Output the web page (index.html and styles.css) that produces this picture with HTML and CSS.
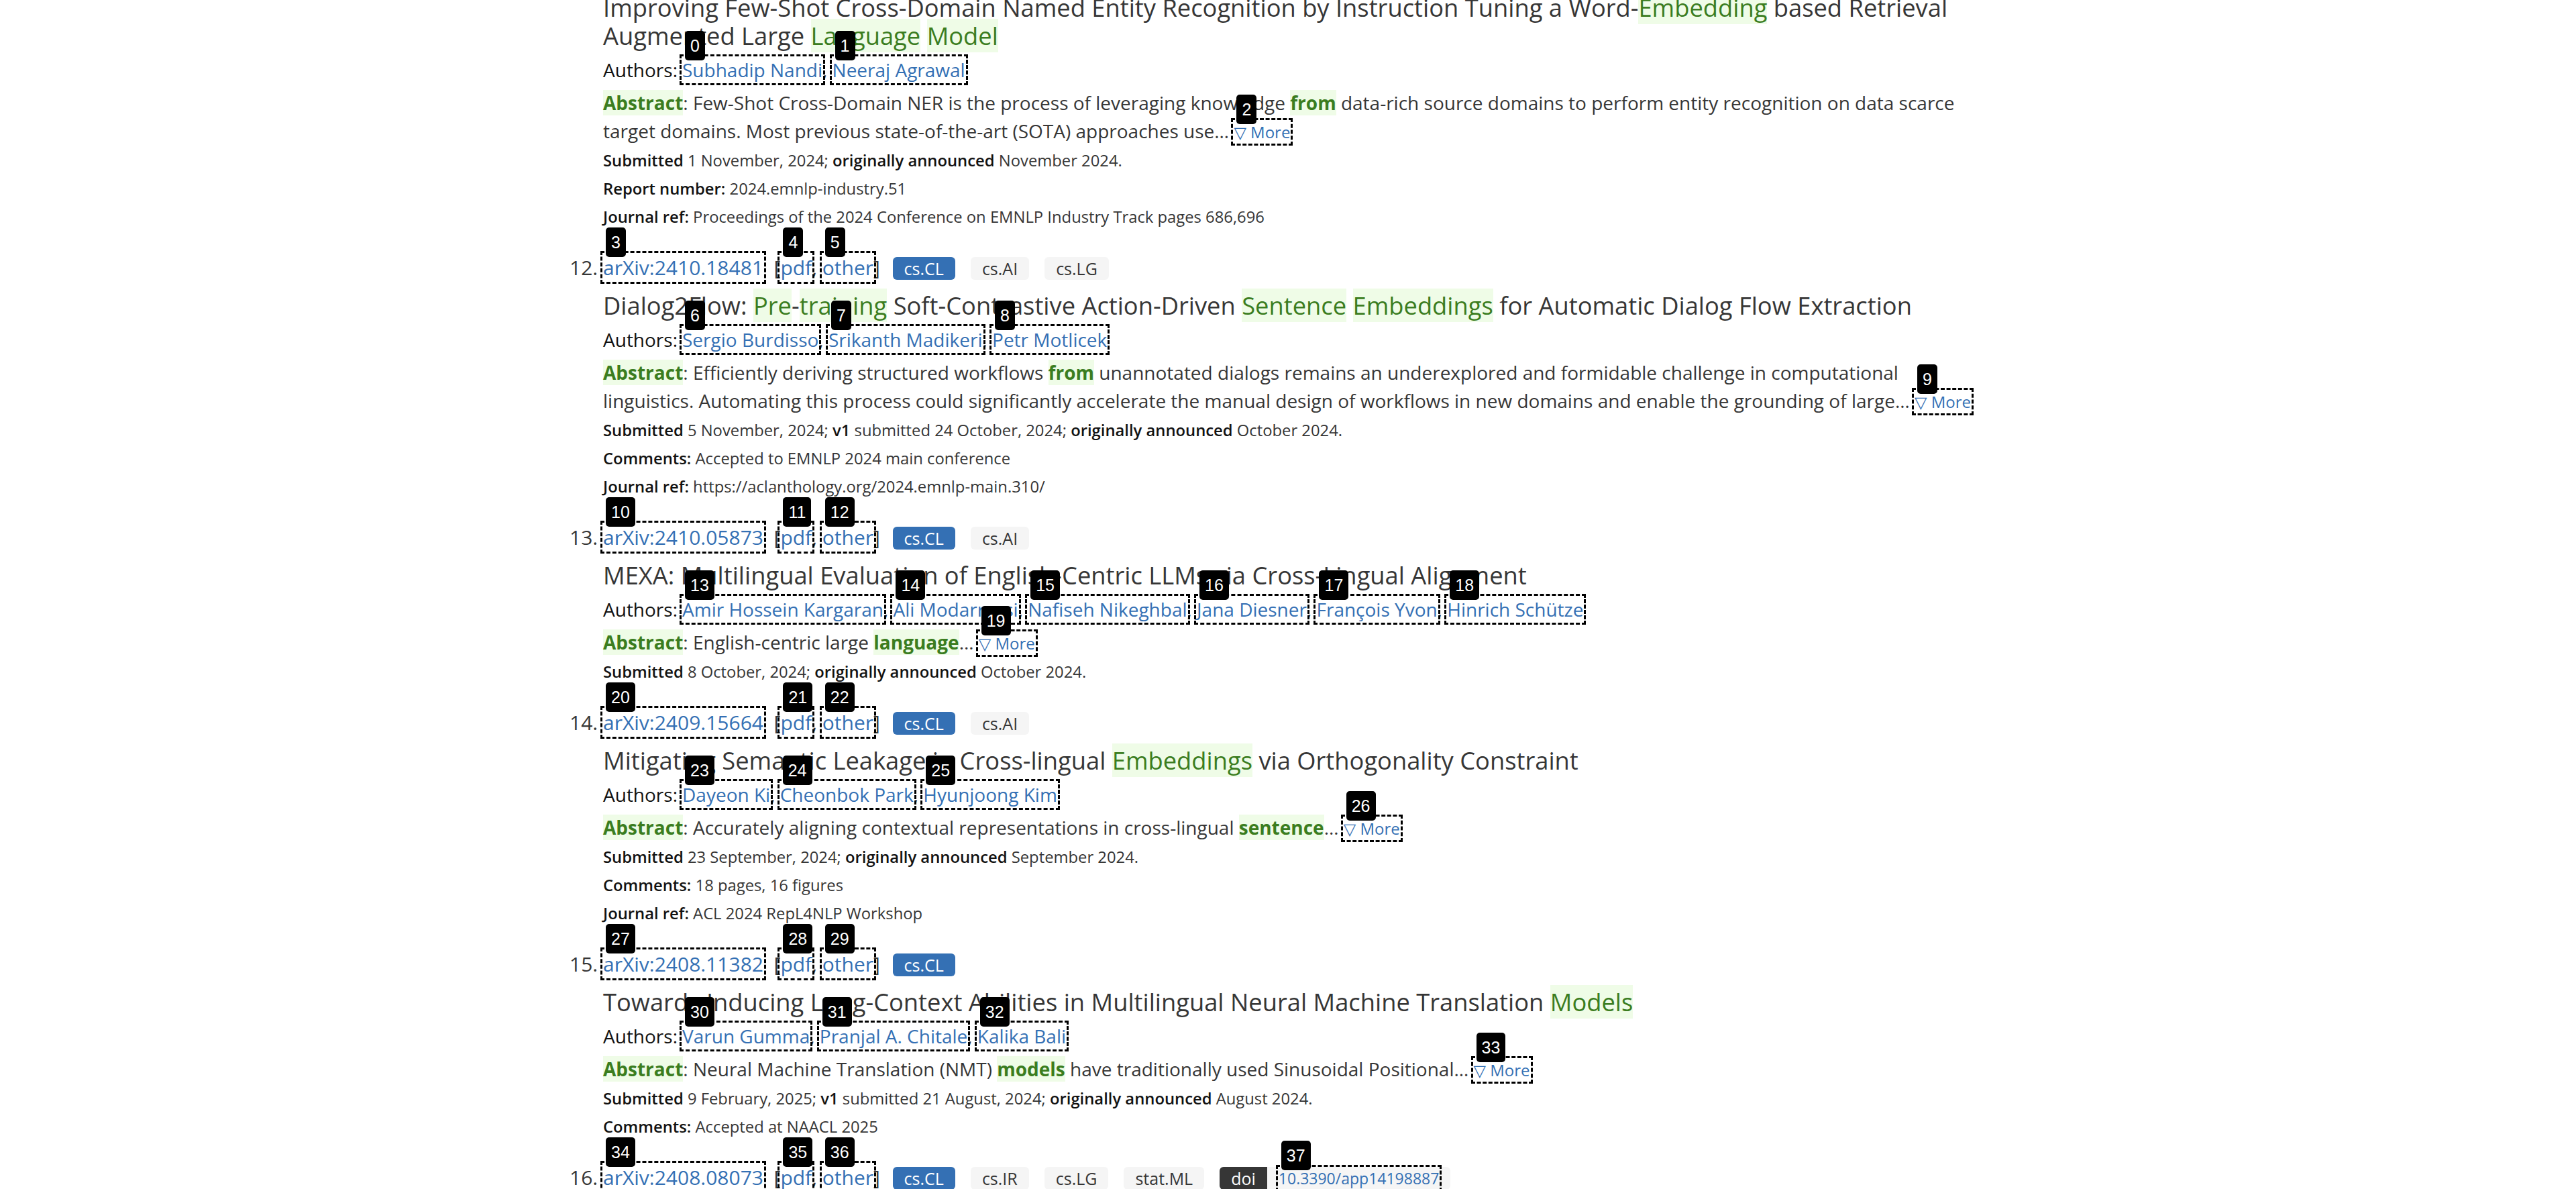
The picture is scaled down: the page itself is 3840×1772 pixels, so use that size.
FILE: index.html
```html
<!DOCTYPE html>
<html lang="en">
<head>
<meta charset="utf-8">
<title>arXiv search results</title>
<link rel="stylesheet" href="styles.css">
</head>
<body>
<ol class="results">
  <li class="result first" value="11">
    <p class="title">Improving Few-Shot Cross-Domain Named Entity Recognition by Instruction Tuning a Word-<span class="hit">Embedding</span> based Retrieval Augmented Large <span class="hit">Language</span> <span class="hit">Model</span></p>
    <p class="authors"><span class="lbl">Authors:</span><span class="mk"><span class="num">0</span><a class="lk" href="#">Subhadip Nandi</a></span>, <span class="mk"><span class="num">1</span><a class="lk" href="#">Neeraj Agrawal</a></span></p>
    <p class="abstract"><span class="hitb">Abstract</span>: Few-Shot Cross-Domain NER is the process of leveraging knowledge <span class="hitb">from</span> data-rich source domains to perform entity recognition on data scarce target domains. Most previous state-of-the-art (SOTA) approaches use&hellip; <span class="mk sm"><span class="num">2</span><a class="lk" href="#">&#9661; More</a></span></p>
    <p class="meta"><span class="b">Submitted</span> 1 November, 2024; <span class="b">originally announced</span> November 2024.</p>
    <p class="meta"><span class="b">Report number:</span> 2024.emnlp-industry.51</p>
    <p class="meta"><span class="b">Journal ref:</span> Proceedings of the 2024 Conference on EMNLP Industry Track pages 686,696</p>
  </li>

  <li class="result" value="12">
    <div class="row"><span class="mk"><span class="num">3</span><a class="lk" href="#">arXiv:2410.18481</a></span>&nbsp;<span>&nbsp;[<span class="mk"><span class="num">4</span><a class="lk" href="#">pdf</a></span>, <span class="mk"><span class="num">5</span><a class="lk" href="#">other</a></span>]&nbsp;</span><span class="tags"><span class="tag blue">cs.CL</span><span class="tag">cs.AI</span><span class="tag">cs.LG</span></span></div>
    <p class="title">Dialog2Flow: <span class="hit">Pre</span>-<span class="hit">training</span> Soft-Contrastive Action-Driven <span class="hit">Sentence</span> <span class="hit">Embeddings</span> for Automatic Dialog Flow Extraction</p>
    <p class="authors"><span class="lbl">Authors:</span><span class="mk"><span class="num">6</span><a class="lk" href="#">Sergio Burdisso</a></span>, <span class="mk"><span class="num">7</span><a class="lk" href="#">Srikanth Madikeri</a></span>, <span class="mk"><span class="num">8</span><a class="lk" href="#">Petr Motlicek</a></span></p>
    <p class="abstract"><span class="hitb">Abstract</span>: Efficiently deriving structured workflows <span class="hitb">from</span> unannotated dialogs remains an underexplored and formidable challenge in computational linguistics. Automating this process could significantly accelerate the manual design of workflows in new domains and enable the grounding of large&hellip; <span class="mk sm"><span class="num">9</span><a class="lk" href="#">&#9661; More</a></span></p>
    <p class="meta"><span class="b">Submitted</span> 5 November, 2024; <span class="b">v1</span> submitted 24 October, 2024; <span class="b">originally announced</span> October 2024.</p>
    <p class="meta"><span class="b">Comments:</span> Accepted to EMNLP 2024 main conference</p>
    <p class="meta"><span class="b">Journal ref:</span> https://aclanthology.org/2024.emnlp-main.310/</p>
  </li>

  <li class="result" value="13">
    <div class="row"><span class="mk"><span class="num">10</span><a class="lk" href="#">arXiv:2410.05873</a></span>&nbsp;<span>&nbsp;[<span class="mk"><span class="num">11</span><a class="lk" href="#">pdf</a></span>, <span class="mk"><span class="num">12</span><a class="lk" href="#">other</a></span>]&nbsp;</span><span class="tags"><span class="tag blue">cs.CL</span><span class="tag">cs.AI</span></span></div>
    <p class="title">MEXA: Multilingual Evaluation of English-Centric LLMs via Cross-Lingual Alignment</p>
    <p class="authors"><span class="lbl">Authors:</span><span class="mk"><span class="num">13</span><a class="lk" href="#">Amir Hossein Kargaran</a></span>, <span class="mk"><span class="num">14</span><a class="lk" href="#">Ali Modarressi</a></span>, <span class="mk"><span class="num">15</span><a class="lk" href="#">Nafiseh Nikeghbal</a></span>, <span class="mk"><span class="num">16</span><a class="lk" href="#">Jana Diesner</a></span>, <span class="mk"><span class="num">17</span><a class="lk" href="#">François Yvon</a></span>, <span class="mk"><span class="num">18</span><a class="lk" href="#">Hinrich Schütze</a></span></p>
    <p class="abstract"><span class="hitb">Abstract</span>: English-centric large <span class="hitb">language</span>&hellip; <span class="mk sm"><span class="num">19</span><a class="lk" href="#">&#9661; More</a></span></p>
    <p class="meta"><span class="b">Submitted</span> 8 October, 2024; <span class="b">originally announced</span> October 2024.</p>
  </li>

  <li class="result" value="14">
    <div class="row"><span class="mk"><span class="num">20</span><a class="lk" href="#">arXiv:2409.15664</a></span>&nbsp;<span>&nbsp;[<span class="mk"><span class="num">21</span><a class="lk" href="#">pdf</a></span>, <span class="mk"><span class="num">22</span><a class="lk" href="#">other</a></span>]&nbsp;</span><span class="tags"><span class="tag blue">cs.CL</span><span class="tag">cs.AI</span></span></div>
    <p class="title">Mitigating Semantic Leakage in Cross-lingual <span class="hit">Embeddings</span> via Orthogonality Constraint</p>
    <p class="authors"><span class="lbl">Authors:</span><span class="mk"><span class="num">23</span><a class="lk" href="#">Dayeon Ki</a></span>, <span class="mk"><span class="num">24</span><a class="lk" href="#">Cheonbok Park</a></span>, <span class="mk"><span class="num">25</span><a class="lk" href="#">Hyunjoong Kim</a></span></p>
    <p class="abstract"><span class="hitb">Abstract</span>: Accurately aligning contextual representations in cross-lingual <span class="hitb">sentence</span>&hellip; <span class="mk sm"><span class="num">26</span><a class="lk" href="#">&#9661; More</a></span></p>
    <p class="meta"><span class="b">Submitted</span> 23 September, 2024; <span class="b">originally announced</span> September 2024.</p>
    <p class="meta"><span class="b">Comments:</span> 18 pages, 16 figures</p>
    <p class="meta"><span class="b">Journal ref:</span> ACL 2024 RepL4NLP Workshop</p>
  </li>

  <li class="result" value="15">
    <div class="row"><span class="mk"><span class="num">27</span><a class="lk" href="#">arXiv:2408.11382</a></span>&nbsp;<span>&nbsp;[<span class="mk"><span class="num">28</span><a class="lk" href="#">pdf</a></span>, <span class="mk"><span class="num">29</span><a class="lk" href="#">other</a></span>]&nbsp;</span><span class="tags"><span class="tag blue">cs.CL</span></span></div>
    <p class="title">Towards Inducing Long-Context Abilities in Multilingual Neural Machine Translation <span class="hit">Models</span></p>
    <p class="authors"><span class="lbl">Authors:</span><span class="mk"><span class="num">30</span><a class="lk" href="#">Varun Gumma</a></span>, <span class="mk"><span class="num">31</span><a class="lk" href="#">Pranjal A. Chitale</a></span>, <span class="mk"><span class="num">32</span><a class="lk" href="#">Kalika Bali</a></span></p>
    <p class="abstract"><span class="hitb">Abstract</span>: Neural Machine Translation (NMT) <span class="hitb">models</span> have traditionally used Sinusoidal Positional&hellip; <span class="mk sm"><span class="num">33</span><a class="lk" href="#">&#9661; More</a></span></p>
    <p class="meta"><span class="b">Submitted</span> 9 February, 2025; <span class="b">v1</span> submitted 21 August, 2024; <span class="b">originally announced</span> August 2024.</p>
    <p class="meta"><span class="b">Comments:</span> Accepted at NAACL 2025</p>
  </li>

  <li class="result" value="16">
    <div class="row"><span class="mk"><span class="num">34</span><a class="lk" href="#">arXiv:2408.08073</a></span>&nbsp;<span>&nbsp;[<span class="mk"><span class="num">35</span><a class="lk" href="#">pdf</a></span>, <span class="mk"><span class="num">36</span><a class="lk" href="#">other</a></span>]&nbsp;</span><span class="tags"><span class="tag blue">cs.CL</span><span class="tag">cs.IR</span><span class="tag">cs.LG</span><span class="tag">stat.ML</span><span class="addons"><span class="tag dark">doi</span><span class="tag light"><span class="mk"><span class="num">37</span><a class="lk" href="#">10.3390/app14198887</a></span></span></span></span></div>
  </li>
</ol>
</body>
</html>
```

FILE: styles.css
```css
html, body {
  margin: 0;
  padding: 0;
  height: 1772px;
  overflow: hidden;
  background: #ffffff;
}

body {
  font-family: "Open Sans", "Noto Sans", "DejaVu Sans", sans-serif;
  color: #363636;
}

a {
  color: #3470b4;
  text-decoration: none;
}

.results {
  margin: -10px 0 0 899px;
  padding: 0;
  width: 2060px;
  list-style: decimal outside;
}

.result {
  padding: 0 0 29px;
  margin: 0;
}

.result::marker {
  font-size: 30px;
  color: #363636;
}

.first {
  list-style: none;
}

.row {
  font-size: 30px;
  line-height: 42px;
  height: 42px;
  margin: 0 0 14px;
  white-space: nowrap;
}

.title {
  font-size: 36.3px;
  line-height: 42px;
  margin: 0 0 9px;
  color: #363636;
}

.authors {
  font-size: 28px;
  line-height: 42px;
  margin: 0 0 7px;
}

.lbl {
  color: #121212;
  margin-right: 7px;
}

.abstract {
  font-size: 28px;
  line-height: 42px;
  margin: 0 0 7px;
}

.meta {
  font-size: 23.8px;
  line-height: 32px;
  margin: 0 0 10px;
}

.b {
  font-weight: 600;
  color: #121212;
}

.hit {
  color: #3b7d1f;
  background: #effce7;
}

.hitb {
  color: #3b7d1f;
  background: #effce7;
  font-weight: 700;
}

/* annotation marks */
.mk {
  position: relative;
}

.mk.sm {
  font-size: 24px;
  line-height: 24px;
}

.lk {
  outline: 3px dashed #000;
  outline-offset: 1px;
}

.num {
  position: absolute;
  left: 4px;
  bottom: calc(100% - 5px);
  height: 44px;
  min-width: 14px;
  padding: 0 8px;
  background: #000;
  color: #fff;
  font-family: "Liberation Sans", Arial, sans-serif;
  font-size: 25px;
  font-weight: 400;
  line-height: 44px;
  text-align: center;
  border-radius: 5px;
  white-space: nowrap;
  z-index: 2;
}

/* category tags */
.tags {
  display: inline-flex;
  align-items: center;
  gap: 23px;
  margin-left: 11px;
  vertical-align: middle;
  position: relative;
  top: -2px;
}

.tag {
  display: inline-flex;
  align-items: center;
  height: 34px;
  padding: 0 17px;
  font-size: 25px;
  line-height: 34px;
  border-radius: 6px;
  background: #f5f5f5;
  color: #363636;
}

.tag.blue {
  background: #3470b4;
  color: #ffffff;
}

.addons {
  display: inline-flex;
  align-items: center;
}

.tag.dark {
  background: #363636;
  color: #ffffff;
  border-radius: 6px 0 0 6px;
}

.tag.light {
  background: #f5f5f5;
  border-radius: 0 6px 6px 0;
}

.tag.light .mk {
  font-size: 23px;
}
```
